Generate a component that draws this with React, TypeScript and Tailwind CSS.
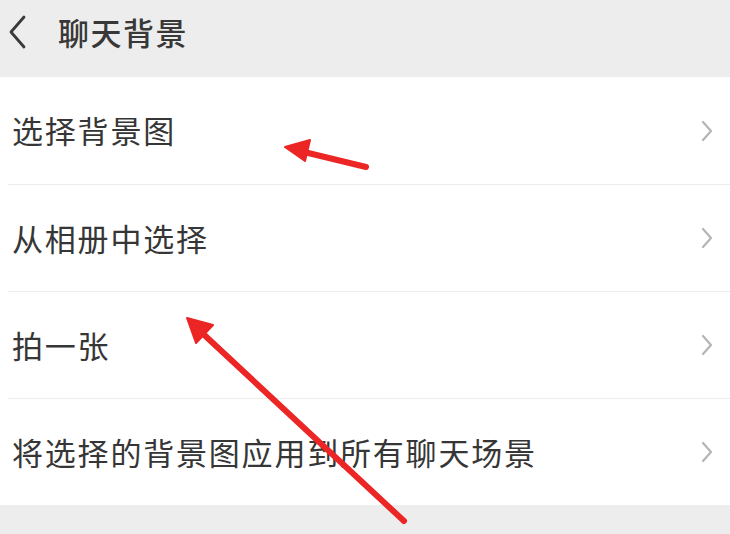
import React from "react";

const rows = ["选择背景图", "从相册中选择", "拍一张", "将选择的背景图应用到所有聊天场景"];

function Chevron({ className = "" }: { className?: string }) {
  return (
    <svg width="14" height="24" viewBox="0 0 14 24" className={className} fill="none">
      <path d="M3 3 L11 12 L3 21" stroke="currentColor" strokeWidth="2.2" strokeLinecap="round" strokeLinejoin="round" />
    </svg>
  );
}

export default function App() {
  return (
    <div
      className="relative w-[730px] h-[534px] overflow-hidden bg-[#ededed] text-[#353535]"
      style={{ fontFamily: '"Noto Sans CJK SC", "Noto Sans", sans-serif' }}
    >
      {/* Header */}
      <div className="h-[64px] flex items-center pl-[8px]">
        <svg width="20" height="34" viewBox="0 0 20 34" fill="none" className="text-[#3a3a3a]">
          <path d="M16 2 L3 17 L16 32" stroke="currentColor" strokeWidth="2.8" strokeLinecap="round" strokeLinejoin="round" />
        </svg>
        <span className="ml-[30px] text-[31px] font-medium tracking-[1.5px] text-[#383838]">聊天背景</span>
      </div>
      <div className="h-[13px]" />

      {/* List */}
      <div className="bg-white">
        {rows.map((r, i) => (
          <div key={r} className="pl-[8px]">
            <div
              className={`h-[107px] flex items-center justify-between pr-[16px] ${i > 0 ? "border-t border-[#ececec]" : ""}`}
            >
              <span className="pl-[4px] text-[31px] tracking-[1.8px] text-[#363636]">{r}</span>
              <Chevron className="text-[#b5b5b5]" />
            </div>
          </div>
        ))}
      </div>

      {/* red annotation arrows */}
      <svg className="absolute inset-0 pointer-events-none" width="730" height="534" viewBox="0 0 730 534">
        <g stroke="#ec2525" strokeWidth="6" strokeLinecap="round" fill="#ec2525">
          <line x1="366" y1="167" x2="300" y2="151" />
          <polygon points="285,147 310,140 305,161" strokeWidth="2" strokeLinejoin="round" />
          <line x1="404" y1="521" x2="200" y2="331" />
          <polygon points="187,318 213,325 196,343" strokeWidth="2" strokeLinejoin="round" />
        </g>
      </svg>
    </div>
  );
}
